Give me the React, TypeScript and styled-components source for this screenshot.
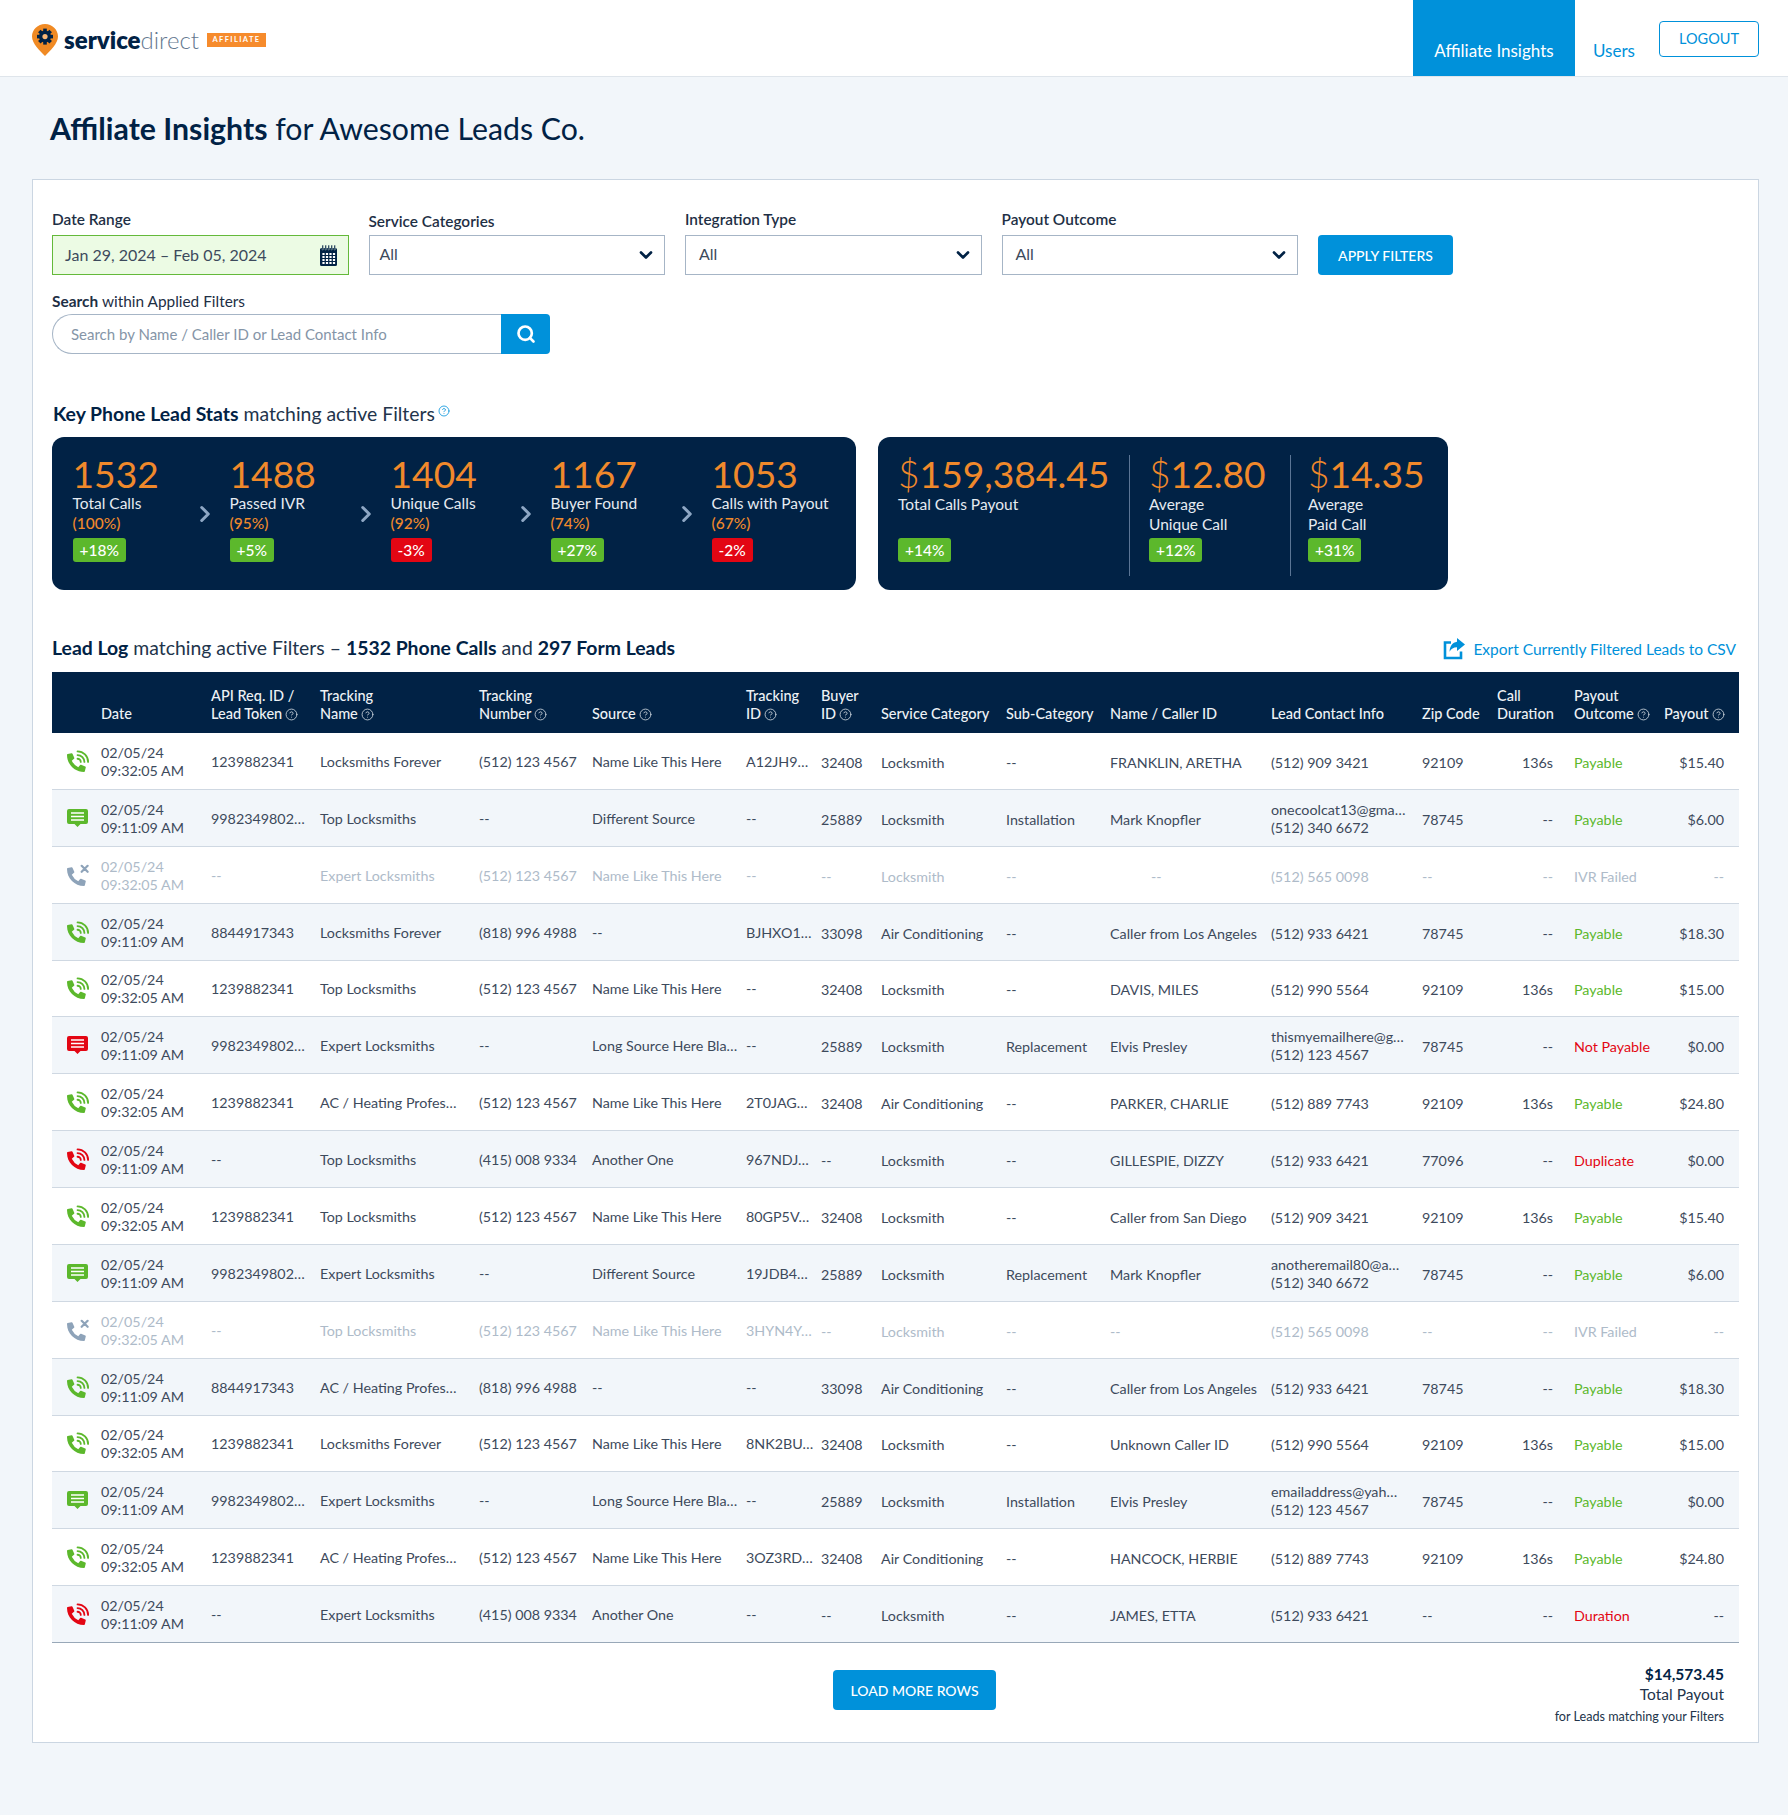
import React from "react";
import styled, { createGlobalStyle } from "styled-components";
import { ChevronDown, ChevronRight, CircleHelp, Search } from "lucide-react";

const NAVY = "#012245";
const BLUE = "#0091DA";
const PAGE = "#F2F6FA";
const GREEN = "#5CB82C";
const RED = "#E30613";
const ORANGE = "#F0892B";
const TEXT = "#3D4A5C";
const MUTED = "#AEBBC9";

const GRID = "49px 110px 109px 159px 113px 154px 75px 60px 125px 104px 161px 151px 75px 77px 90px 75px";

const Global = createGlobalStyle`
  html, body { margin: 0; padding: 0; background: ${PAGE}; }
  body { font-family: Lato, "Liberation Sans", sans-serif; color: ${TEXT}; }
  * { box-sizing: border-box; }
`;

const Page = styled.div`
  min-height: 1815px;
  background: ${PAGE};
`;

const Header = styled.header`
  height: 77px;
  background: #fff;
  border-bottom: 1px solid #dfe5eb;
  display: flex;
  align-items: flex-start;
  padding: 0 29px 0 32px;
`;

const Brand = styled.div`
  display: flex;
  align-items: center;
  height: 76px;
  padding-top: 4px;
`;

const BrandName = styled.div`
  font-size: 24px;
  line-height: 30px;
  margin-left: 6px;
  color: ${NAVY};
  font-weight: 800;
  span {
    font-weight: 300;
    color: #64788f;
  }
`;

const BrandTag = styled.div`
  margin-left: 8px;
  width: 59px;
  height: 14px;
  background: #f68b2c;
  color: #fff;
  font-size: 7.5px;
  font-weight: 700;
  letter-spacing: 1.4px;
  line-height: 14px;
  text-align: center;
`;

const Nav = styled.nav`
  margin-left: auto;
  display: flex;
  align-items: flex-start;
`;

const ActiveTab = styled.a`
  width: 162px;
  height: 76px;
  background: ${BLUE};
  color: #fff;
  font-size: 17px;
  line-height: 22px;
  padding-top: 40px;
  text-align: center;
`;

const NavLink = styled.a`
  margin-left: 18px;
  width: 66px;
  color: ${BLUE};
  font-size: 17px;
  line-height: 22px;
  padding-top: 40px;
`;

const Logout = styled.button`
  width: 100px;
  height: 36px;
  margin-top: 21px;
  background: #fff;
  border: 1px solid ${BLUE};
  border-radius: 4px;
  color: ${BLUE};
  font: 400 14.5px/20px Lato, sans-serif;
  padding: 0 0 1px;
`;

const Title = styled.h1`
  margin: 0;
  height: 102px;
  padding: 31px 0 0 50px;
  font-size: 30.25px;
  line-height: 40px;
  font-weight: 400;
  color: ${NAVY};
  strong {
    font-weight: 700;
  }
`;

const Panel = styled.main`
  margin: 0 29px 0 32px;
  height: 1564px;
  background: #fff;
  border: 1px solid #cbd6e2;
  padding: 30px 19px 0;
`;

const Filters = styled.div`
  display: flex;
  align-items: flex-end;
  gap: 20px;
`;

const Field = styled.div`
  width: 296.5px;
  display: flex;
  flex-direction: column;
`;

const Label = styled.label<{ $gap: number }>`
  font-size: 15.4px;
  line-height: 18px;
  font-weight: 600;
  color: #1e2f45;
  margin-bottom: ${(p) => p.$gap}px;
  strong {
    font-weight: 700;
  }
  span {
    font-weight: 400;
  }
`;

const DateBox = styled.div`
  height: 40px;
  background: #ecfbe4;
  border: 1px solid #64b93a;
  display: flex;
  align-items: center;
  justify-content: space-between;
  padding: 0 11px 2px 12px;
  font-size: 16px;
  color: ${TEXT};
  svg {
    margin-top: 2px;
  }
`;

const SelectBox = styled.div<{ $pad: number }>`
  height: 40px;
  background: #fff;
  border: 1px solid #a6b5c6;
  display: flex;
  align-items: center;
  justify-content: space-between;
  padding: 0 8px 3px ${(p) => p.$pad}px;
  font-size: 16px;
  color: ${TEXT};
  svg {
    color: ${NAVY};
    margin-top: 3px;
  }
`;

const PrimaryButton = styled.button<{ $w: number }>`
  width: ${(p) => p.$w}px;
  height: 40px;
  background: ${BLUE};
  border: 0;
  border-radius: 4px;
  color: #fff;
  font: 500 14px/20px Lato, sans-serif;
  padding: 2px 0 0;
`;

const SearchWrap = styled.div`
  margin-top: 17px;
  width: 498px;
  display: flex;
  flex-direction: column;
`;

const SearchRow = styled.div`
  display: flex;
  height: 40px;
`;

const SearchInput = styled.div`
  flex: 1;
  border: 1px solid #a6b5c6;
  border-right: 0;
  border-radius: 20px 0 0 20px;
  display: flex;
  align-items: center;
  padding-left: 18px;
  font-size: 15px;
  color: #8595a7;
`;

const SearchButton = styled.button`
  width: 49px;
  background: ${BLUE};
  border: 0;
  border-radius: 0 4px 4px 0;
  display: flex;
  align-items: center;
  justify-content: center;
  color: #fff;
  padding: 0 0 0 1px;
`;

const SectionTitle = styled.h2`
  margin: 48px 0 0 1px;
  font-size: 19.4px;
  line-height: 24px;
  font-weight: 400;
  color: #22344b;
  strong {
    font-weight: 700;
    color: ${NAVY};
  }
  svg {
    color: ${BLUE};
    margin-left: 3px;
    vertical-align: 4px;
  }
`;

const Cards = styled.div`
  display: flex;
  gap: 22px;
  margin-top: 11px;
`;

const FunnelCard = styled.section`
  width: 804px;
  height: 153px;
  background: ${NAVY};
  border-radius: 12px;
  padding: 19px 0 0 20.5px;
  display: flex;
`;

const MoneyCard = styled.section`
  width: 570px;
  height: 153px;
  background: ${NAVY};
  border-radius: 12px;
  padding: 18px 0 0 20px;
  display: flex;
`;

const Step = styled.div<{ $w: number }>`
  width: ${(p) => p.$w}px;
  display: flex;
`;

const StepBody = styled.div`
  flex: 1;
  white-space: nowrap;
`;

const StepArrow = styled.div`
  width: 50px;
  height: 112px;
  display: flex;
  align-items: center;
  justify-content: center;
  color: #8ea7c4;
  padding-top: 4px;
`;

const Big = styled.div`
  font-size: 37.2px;
  line-height: 35px;
  margin-bottom: 2px;
  color: ${ORANGE};
  white-space: nowrap;
  span {
    font-weight: 300;
  }
`;

const MoneyBig = styled(Big)`
  margin-top: -2px;
`;

const StatLabel = styled.div`
  font-size: 15.5px;
  line-height: 20px;
  color: #e6ebf1;
`;

const Percent = styled.div`
  font-size: 15.5px;
  line-height: 20px;
  font-weight: 500;
  color: ${ORANGE};
`;

const Trend = styled.div<{ $down?: boolean }>`
  display: inline-block;
  height: 24px;
  line-height: 24px;
  margin-top: 5px;
  padding: 0 7px;
  border-radius: 3px;
  font-size: 15.5px;
  font-weight: 500;
  color: #fff;
  background: ${(p) => (p.$down ? RED : GREEN)};
`;

const MoneyItem = styled.div<{ $w: number; $pad: number; $rule: boolean }>`
  width: ${(p) => p.$w}px;
  height: 121px;
  padding: 3px 0 14px ${(p) => p.$pad}px;
  border-left: ${(p) => (p.$rule ? "1px solid #5b7595" : "0")};
  display: flex;
  flex-direction: column;
  align-items: flex-start;
`;

const MoneyLabel = styled.div`
  margin-top: 1px;
  font-size: 15.5px;
  line-height: 20px;
  color: #e6ebf1;
  white-space: pre-line;
`;

const MoneyTrend = styled(Trend)`
  margin-top: auto;
`;

const LogHead = styled.div`
  display: flex;
  justify-content: space-between;
  align-items: center;
  margin-top: 46px;
  height: 24px;
  padding-right: 3px;
`;

const LogTitle = styled.h2`
  margin: 0;
  font-size: 19.4px;
  line-height: 24px;
  font-weight: 400;
  color: #22344b;
  strong {
    font-weight: 700;
    color: ${NAVY};
  }
`;

const ExportLink = styled.a`
  display: flex;
  align-items: center;
  gap: 8px;
  color: ${BLUE};
  font-size: 15.5px;
  padding-top: 1px;
`;

const Table = styled.div`
  margin-top: 12px;
  width: 1687px;
`;

const HeadRow = styled.div`
  display: grid;
  grid-template-columns: ${GRID};
  height: 61px;
  background: ${NAVY};
  align-items: end;
  padding-bottom: 10px;
`;

const HeadCell = styled.div`
  font-size: 14.5px;
  line-height: 18px;
  font-weight: 500;
  color: #eef2f6;
  white-space: pre-line;
  svg {
    margin-left: 3px;
    vertical-align: -2px;
    opacity: 0.85;
  }
`;

const Row = styled.div<{ $alt: boolean; $muted: boolean; $last: boolean }>`
  display: grid;
  grid-template-columns: ${GRID};
  height: 56.875px;
  background: ${(p) => (p.$alt ? PAGE : "#fff")};
  border-bottom: 1px solid ${(p) => (p.$last ? "#98a8b8" : "#cfd8e2")};
  color: ${(p) => (p.$muted ? MUTED : TEXT)};
  align-items: center;
`;

const IconCell = styled.div`
  padding-left: 15px;
  display: flex;
  align-items: center;
`;

const Cell = styled.div<{ $shift?: number; $right?: number; $indent?: number; $color?: string }>`
  font-size: 14.3px;
  line-height: 18px;
  white-space: pre-line;
  padding-top: ${(p) => p.$shift ?? 0}px;
  padding-right: ${(p) => p.$right ?? 0}px;
  padding-left: ${(p) => p.$indent ?? 0}px;
  text-align: ${(p) => (p.$right ? "right" : "left")};
  color: ${(p) => p.$color ?? "inherit"};
`;

const Footer = styled.div`
  display: flex;
  align-items: flex-start;
  padding: 27px 15px 0 781px;
`;

const TotalBlock = styled.div`
  margin-left: auto;
  margin-top: -6px;
  text-align: right;
  color: #22344b;
`;

const TotalValue = styled.div`
  font-size: 15.5px;
  line-height: 20px;
  font-weight: 700;
  color: ${NAVY};
`;

const TotalLabel = styled.div`
  font-size: 15.5px;
  line-height: 21px;
`;

const TotalNote = styled.div`
  font-size: 12.6px;
  line-height: 18px;
  margin-top: 3px;
`;

const Handset = ({ color }: { color: string }) => (
  <path
    transform="translate(0,3.5) scale(0.04)"
    fill={color}
    d="M497.39 361.8l-112-48a24 24 0 0 0-28 6.9l-49.6 60.6A370.66 370.66 0 0 1 130.6 204.11l60.6-49.6a23.94 23.94 0 0 0 6.9-28l-48-112A24.16 24.16 0 0 0 122.6.61l-104 24A24 24 0 0 0 0 48c0 256.5 207.9 464 464 464a24 24 0 0 0 23.4-18.6l24-104a24.29 24.29 0 0 0-14.01-27.6z"
  />
);

const PhoneIcon = ({ color }: { color: string }) => (
  <svg width="22" height="22" viewBox="0 0 24 24" fill="none">
    <Handset color={color} />
    <g stroke={color} strokeWidth="2" strokeLinecap="round">
      <path d="M11.5 9.5a3.5 3.5 0 0 1 3.5 3.5" />
      <path d="M11.5 5.5a7.5 7.5 0 0 1 7.5 7.5" />
      <path d="M11.5 1.5a11.5 11.5 0 0 1 11.5 11.5" />
    </g>
  </svg>
);

const MissedIcon = ({ color }: { color: string }) => (
  <svg width="22" height="22" viewBox="0 0 24 24" fill="none">
    <Handset color={color} />
    <path d="M16 2l6.5 6.5M22.5 2L16 8.5" stroke={color} strokeWidth="2.4" strokeLinecap="round" />
  </svg>
);

const MessageIcon = ({ color }: { color: string }) => (
  <svg width="21" height="18" viewBox="0 0 21 18">
    <path
      fill={color}
      d="M2 0h17a2 2 0 0 1 2 2v11a2 2 0 0 1-2 2h-5.5l-3 3-3-3H2a2 2 0 0 1-2-2V2a2 2 0 0 1 2-2z"
    />
    <path d="M4 4h13M4 7.5h13M4 11h13" stroke="#fff" strokeWidth="1.6" />
  </svg>
);

const LogoMark = () => (
  <svg width="26" height="32" viewBox="0 0 26 32">
    <path
      fill="#F08A24"
      d="M13 0C5.8 0 0 5.6 0 12.6c0 7 8 14.4 13 19.4 5-5 13-12.4 13-19.4C26 5.6 20.2 0 13 0z"
    />
    <g fill={NAVY}>
      {[0, 45, 90, 135, 180, 225, 270, 315].map((a) => (
        <rect key={a} x="11.2" y="4.6" width="3.6" height="4" transform={`rotate(${a} 13 12.6)`} />
      ))}
      <circle cx="13" cy="12.6" r="6" />
    </g>
    <circle cx="13" cy="12.6" r="2.6" fill="#F9B776" />
  </svg>
);

const CalendarIcon = () => (
  <svg width="17" height="21" viewBox="0 0 17 21">
    <path fill={NAVY} d="M1.5 3h14A1.5 1.5 0 0 1 17 4.5v15a1.5 1.5 0 0 1-1.5 1.5h-14A1.5 1.5 0 0 1 0 19.5v-15A1.5 1.5 0 0 1 1.5 3z" />
    {[2, 5, 8, 11, 14].map((x) => (
      <rect key={x} x={x} y="0" width="1.4" height="5" rx="0.7" fill={NAVY} stroke="#ecfbe4" strokeWidth="0.4" />
    ))}
    {[8, 11, 14, 17].map((y) =>
      [2.4, 5.9, 9.4, 12.9].map((x) => (
        <rect key={`${x}-${y}`} x={x} y={y} width="2.2" height="2" fill="#fff" />
      ))
    )}
  </svg>
);

const ExportIcon = () => (
  <svg width="22" height="22" viewBox="0 0 22 22" fill="none">
    <path d="M8 4.5H2v15.5h16v-6.5" stroke={BLUE} strokeWidth="2.6" />
    <path fill={BLUE} d="M14 0l8 6.5-8 6.5V9.2c-3.5 0-6 1.6-7.4 4.6 0-5.4 2.8-9.3 7.4-10z" />
  </svg>
);

const Help = ({ size = 12 }: { size?: number }) => <CircleHelp size={size} strokeWidth={1.6} />;

type LeadKind = "call" | "callRed" | "form" | "formRed" | "missed";

const leadIcon = (k: LeadKind) => {
  if (k === "call") return <PhoneIcon color={GREEN} />;
  if (k === "callRed") return <PhoneIcon color={RED} />;
  if (k === "form") return <MessageIcon color={GREEN} />;
  if (k === "formRed") return <MessageIcon color={RED} />;
  return <MissedIcon color="#8EA3B9" />;
};

const A = "09:32:05 AM";
const B = "09:11:09 AM";
const NL = "Name Like This Here";
type Lead = [LeadKind, string, string, string, string, string, string, string, string, string, string, string, string, string, string, string];

const leads: Lead[] = [
  ["call", A, "1239882341", "Locksmiths Forever", "(512) 123 4567", NL, "A12JH9…", "32408", "Locksmith", "--", "FRANKLIN, ARETHA", "(512) 909 3421", "92109", "136s", "Payable", "$15.40"],
  ["form", B, "9982349802…", "Top Locksmiths", "--", "Different Source", "--", "25889", "Locksmith", "Installation", "Mark Knopfler", "onecoolcat13@gma…\n(512) 340 6672", "78745", "--", "Payable", "$6.00"],
  ["missed", A, "--", "Expert Locksmiths", "(512) 123 4567", NL, "--", "--", "Locksmith", "--", "--", "(512) 565 0098", "--", "--", "IVR Failed", "--"],
  ["call", B, "8844917343", "Locksmiths Forever", "(818) 996 4988", "--", "BJHXO1…", "33098", "Air Conditioning", "--", "Caller from Los Angeles", "(512) 933 6421", "78745", "--", "Payable", "$18.30"],
  ["call", A, "1239882341", "Top Locksmiths", "(512) 123 4567", NL, "--", "32408", "Locksmith", "--", "DAVIS, MILES", "(512) 990 5564", "92109", "136s", "Payable", "$15.00"],
  ["formRed", B, "9982349802…", "Expert Locksmiths", "--", "Long Source Here Bla…", "--", "25889", "Locksmith", "Replacement", "Elvis Presley", "thismyemailhere@g…\n(512) 123 4567", "78745", "--", "Not Payable", "$0.00"],
  ["call", A, "1239882341", "AC / Heating Profes…", "(512) 123 4567", NL, "2T0JAG…", "32408", "Air Conditioning", "--", "PARKER, CHARLIE", "(512) 889 7743", "92109", "136s", "Payable", "$24.80"],
  ["callRed", B, "--", "Top Locksmiths", "(415) 008 9334", "Another One", "967NDJ…", "--", "Locksmith", "--", "GILLESPIE, DIZZY", "(512) 933 6421", "77096", "--", "Duplicate", "$0.00"],
  ["call", A, "1239882341", "Top Locksmiths", "(512) 123 4567", NL, "80GP5V…", "32408", "Locksmith", "--", "Caller from San Diego", "(512) 909 3421", "92109", "136s", "Payable", "$15.40"],
  ["form", B, "9982349802…", "Expert Locksmiths", "--", "Different Source", "19JDB4…", "25889", "Locksmith", "Replacement", "Mark Knopfler", "anotheremail80@a…\n(512) 340 6672", "78745", "--", "Payable", "$6.00"],
  ["missed", A, "--", "Top Locksmiths", "(512) 123 4567", NL, "3HYN4Y…", "--", "Locksmith", "--", "--", "(512) 565 0098", "--", "--", "IVR Failed", "--"],
  ["call", B, "8844917343", "AC / Heating Profes…", "(818) 996 4988", "--", "--", "33098", "Air Conditioning", "--", "Caller from Los Angeles", "(512) 933 6421", "78745", "--", "Payable", "$18.30"],
  ["call", A, "1239882341", "Locksmiths Forever", "(512) 123 4567", NL, "8NK2BU…", "32408", "Locksmith", "--", "Unknown Caller ID", "(512) 990 5564", "92109", "136s", "Payable", "$15.00"],
  ["form", B, "9982349802…", "Expert Locksmiths", "--", "Long Source Here Bla…", "--", "25889", "Locksmith", "Installation", "Elvis Presley", "emailaddress@yah…\n(512) 123 4567", "78745", "--", "Payable", "$0.00"],
  ["call", A, "1239882341", "AC / Heating Profes…", "(512) 123 4567", NL, "3OZ3RD…", "32408", "Air Conditioning", "--", "HANCOCK, HERBIE", "(512) 889 7743", "92109", "136s", "Payable", "$24.80"],
  ["callRed", B, "--", "Expert Locksmiths", "(415) 008 9334", "Another One", "--", "--", "Locksmith", "--", "JAMES, ETTA", "(512) 933 6421", "--", "--", "Duration", "--"],
];

const outcomeColor = (o: string) => {
  if (o === "Payable") return GREEN;
  if (o === "IVR Failed") return undefined;
  return RED;
};

const headers: { t: string; help?: boolean }[] = [
  { t: "" },
  { t: "Date" },
  { t: "API Req. ID /\nLead Token", help: true },
  { t: "Tracking\nName", help: true },
  { t: "Tracking\nNumber", help: true },
  { t: "Source", help: true },
  { t: "Tracking\nID", help: true },
  { t: "Buyer\nID", help: true },
  { t: "Service Category" },
  { t: "Sub-Category" },
  { t: "Name / Caller ID" },
  { t: "Lead Contact Info" },
  { t: "Zip Code" },
  { t: "Call\nDuration" },
  { t: "Payout\nOutcome", help: true },
  { t: "Payout", help: true },
];

const funnel = [
  { n: "1532", l: "Total Calls", p: "(100%)", d: "+18%", w: 157, arrow: true },
  { n: "1488", l: "Passed IVR", p: "(95%)", d: "+5%", w: 161, arrow: true },
  { n: "1404", l: "Unique Calls", p: "(92%)", d: "-3%", w: 160, arrow: true },
  { n: "1167", l: "Buyer Found", p: "(74%)", d: "+27%", w: 161, arrow: true },
  { n: "1053", l: "Calls with Payout", p: "(67%)", d: "-2%", w: 140, arrow: false },
];

const money = [
  { v: "159,384.45", l: "Total Calls Payout", d: "+14%", w: 231, pad: 0, rule: false },
  { v: "12.80", l: "Average\nUnique Call", d: "+12%", w: 161, pad: 19, rule: true },
  { v: "14.35", l: "Average\nPaid Call", d: "+31%", w: 150, pad: 17, rule: true },
];

export default function App() {
  return (
    <Page>
      <Global />
      <Header>
        <Brand>
          <LogoMark />
          <BrandName>
            service<span>direct</span>
          </BrandName>
          <BrandTag>AFFILIATE</BrandTag>
        </Brand>
        <Nav>
          <ActiveTab>Affiliate Insights</ActiveTab>
          <NavLink>Users</NavLink>
          <Logout>LOGOUT</Logout>
        </Nav>
      </Header>
      <Title>
        <strong>Affiliate Insights</strong> for Awesome Leads Co.
      </Title>
      <Panel>
        <Filters>
          <Field>
            <Label $gap={7}>Date Range</Label>
            <DateBox>
              Jan 29, 2024 – Feb 05, 2024
              <CalendarIcon />
            </DateBox>
          </Field>
          <Field>
            <Label $gap={5}>Service Categories</Label>
            <SelectBox $pad={10}>
              All
              <ChevronDown size={20} strokeWidth={3.2} />
            </SelectBox>
          </Field>
          <Field>
            <Label $gap={7}>Integration Type</Label>
            <SelectBox $pad={13}>
              All
              <ChevronDown size={20} strokeWidth={3.2} />
            </SelectBox>
          </Field>
          <Field>
            <Label $gap={7}>Payout Outcome</Label>
            <SelectBox $pad={13}>
              All
              <ChevronDown size={20} strokeWidth={3.2} />
            </SelectBox>
          </Field>
          <PrimaryButton $w={135}>APPLY FILTERS</PrimaryButton>
        </Filters>
        <SearchWrap>
          <Label $gap={4}>
            <strong>Search</strong> <span>within Applied Filters</span>
          </Label>
          <SearchRow>
            <SearchInput>Search by Name / Caller ID or Lead Contact Info</SearchInput>
            <SearchButton>
              <Search size={20} strokeWidth={3.2} />
            </SearchButton>
          </SearchRow>
        </SearchWrap>

        <SectionTitle>
          <strong>Key Phone Lead Stats</strong> matching active Filters
          <Help />
        </SectionTitle>
        <Cards>
          <FunnelCard>
            {funnel.map((s) => (
              <Step key={s.n} $w={s.w}>
                <StepBody>
                  <Big>{s.n}</Big>
                  <StatLabel>{s.l}</StatLabel>
                  <Percent>{s.p}</Percent>
                  <Trend $down={s.d.startsWith("-")}>{s.d}</Trend>
                </StepBody>
                {s.arrow && (
                  <StepArrow>
                    <ChevronRight size={26} strokeWidth={2.8} />
                  </StepArrow>
                )}
              </Step>
            ))}
          </FunnelCard>
          <MoneyCard>
            {money.map((m) => (
              <MoneyItem key={m.v} $w={m.w} $pad={m.pad} $rule={m.rule}>
                <MoneyBig>
                  <span>$</span>
                  {m.v}
                </MoneyBig>
                <MoneyLabel>{m.l}</MoneyLabel>
                <MoneyTrend>{m.d}</MoneyTrend>
              </MoneyItem>
            ))}
          </MoneyCard>
        </Cards>

        <LogHead>
          <LogTitle>
            <strong>Lead Log</strong> matching active Filters – <strong>1532 Phone Calls</strong> and{" "}
            <strong>297 Form Leads</strong>
          </LogTitle>
          <ExportLink>
            <ExportIcon />
            Export Currently Filtered Leads to CSV
          </ExportLink>
        </LogHead>

        <Table>
          <HeadRow>
            {headers.map((h, i) => (
              <HeadCell key={i}>
                {h.t}
                {h.help && <Help size={13} />}
              </HeadCell>
            ))}
          </HeadRow>
          {leads.map((r, i) => {
            const muted = r[0] === "missed";
            return (
              <Row key={i} $alt={i % 2 === 1} $muted={muted} $last={i === leads.length - 1}>
                <IconCell>{leadIcon(r[0])}</IconCell>
                <Cell $shift={2}>
                  {"02/05/24\n"}
                  {r[1]}
                </Cell>
                <Cell $shift={2}>{r[2]}</Cell>
                <Cell $shift={2}>{r[3]}</Cell>
                <Cell $shift={2}>{r[4]}</Cell>
                <Cell $shift={2}>{r[5]}</Cell>
                <Cell $shift={2}>{r[6]}</Cell>
                <Cell $shift={4}>{r[7]}</Cell>
                <Cell $shift={4}>{r[8]}</Cell>
                <Cell $shift={4}>{r[9]}</Cell>
                <Cell $shift={4} $indent={i === 2 ? 41 : 0}>
                  {r[10]}
                </Cell>
                <Cell $shift={r[11].includes("\n") ? 2 : 4}>{r[11]}</Cell>
                <Cell $shift={4}>{r[12]}</Cell>
                <Cell $shift={4} $right={21}>
                  {r[13]}
                </Cell>
                <Cell $shift={4} $color={outcomeColor(r[14])}>
                  {r[14]}
                </Cell>
                <Cell $shift={4} $right={15}>
                  {r[15]}
                </Cell>
              </Row>
            );
          })}
          <Footer>
            <PrimaryButton $w={163}>LOAD MORE ROWS</PrimaryButton>
            <TotalBlock>
              <TotalValue>$14,573.45</TotalValue>
              <TotalLabel>Total Payout</TotalLabel>
              <TotalNote>for Leads matching your Filters</TotalNote>
            </TotalBlock>
          </Footer>
        </Table>
      </Panel>
    </Page>
  );
}
